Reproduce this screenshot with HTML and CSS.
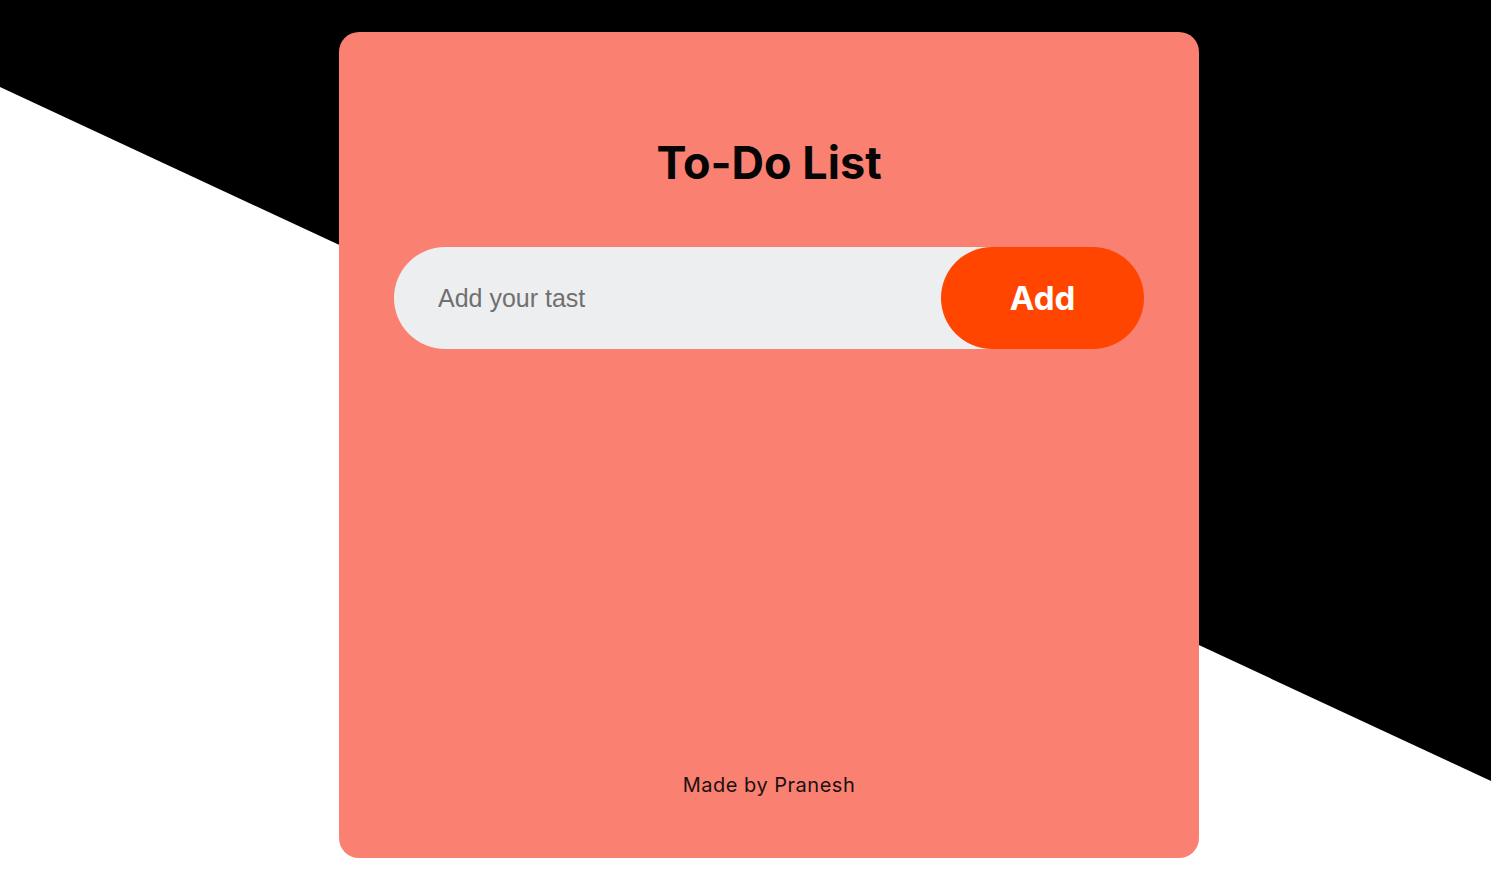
FILE: index.html
```html
<!DOCTYPE html>
<html lang="en">
<head>
<meta charset="utf-8">
<title>To-Do List</title>
<link rel="stylesheet" href="styles.css">
</head>
<body>
<div class="backdrop"></div>
<main class="page">
  <section class="card">
    <h1 class="title">To-Do List</h1>
    <div class="row">
      <input class="task-input" type="text" placeholder="Add your tast">
      <button class="add-btn">Add</button>
    </div>
    <ul class="list"></ul>
    <p class="footer">Made by Pranesh</p>
  </section>
</main>
</body>
</html>
```

FILE: styles.css
```css
* { box-sizing: border-box; }
html, body { margin: 0; padding: 0; }
body {
  width: 1491px;
  height: 889px;
  overflow: hidden;
  background: #ffffff;
  position: relative;
  font-family: "Inter", "Liberation Sans", sans-serif;
}
.backdrop {
  position: absolute;
  inset: 0;
  background: #000000;
  clip-path: polygon(0 0, 100% 0, 100% 781px, 0 87px);
  z-index: 0;
}
.page {
  position: relative;
  z-index: 1;
  padding: 32px 0 0 339px;
}
.card {
  width: 860px;
  height: 826px;
  background: #fa8072;
  border-radius: 20px;
  padding: 108px 55px 0;
  display: flex;
  flex-direction: column;
}
.title {
  margin: 0;
  text-align: center;
  font-family: "Inter", sans-serif;
  font-weight: 700;
  font-size: 45px;
  line-height: 1;
  color: #050505;
  letter-spacing: 0;
}
.row {
  margin-top: 62px;
  display: flex;
  height: 102px;
}
.task-input {
  flex: 1;
  min-width: 0;
  height: 102px;
  border: none;
  outline: none;
  background: #edeef0;
  border-radius: 51px 0 0 51px;
  padding: 0 80px 0 44px;
  font-family: "Liberation Sans", Arial, sans-serif;
  font-size: 25px;
  color: #333;
}
.task-input::placeholder { color: #707070; }
.add-btn {
  width: 203px;
  height: 102px;
  margin-left: -50px;
  border: none;
  border-radius: 51px;
  background: #ff4500;
  color: #ffffff;
  font-family: "Inter", sans-serif;
  font-weight: 700;
  font-size: 33px;
  cursor: pointer;
}
.list {
  flex: 1;
  margin: 0;
  padding: 0;
  list-style: none;
}
.footer {
  margin: 0 0 61px;
  text-align: center;
  font-family: "Inter", sans-serif;
  font-size: 20px;
  line-height: 24px;
  letter-spacing: 0.5px;
  color: #1a1010;
}
```
